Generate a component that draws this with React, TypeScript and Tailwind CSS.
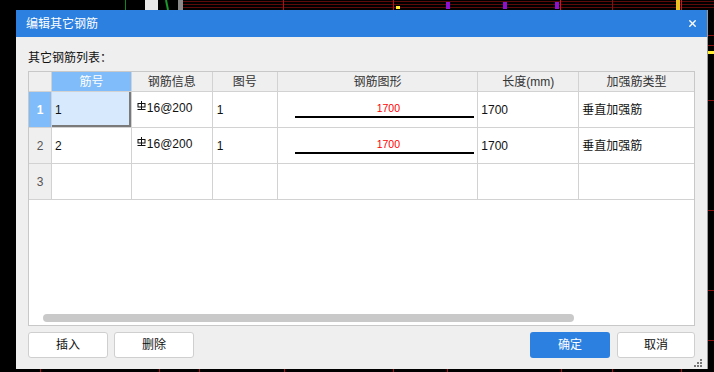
import { X } from "lucide-react";

const cols = [
  { key: "no", title: "筋号", w: "w-[80px]" },
  { key: "info", title: "钢筋信息", w: "w-[81px]" },
  { key: "fig", title: "图号", w: "w-[65px]" },
  { key: "shape", title: "钢筋图形", w: "w-[201px]" },
  { key: "len", title: "长度(mm)", w: "w-[101px]" },
  { key: "type", title: "加强筋类型", w: "w-[115px]" },
];

const rows = [
  { no: "1", info: "16@200", fig: "1", len: "1700", type: "垂直加强筋" },
  { no: "2", info: "16@200", fig: "1", len: "1700", type: "垂直加强筋" },
  null,
];

// grade III rebar mark, not in any installed font
const RebarMark = () => (
  <svg width="9" height="10" viewBox="0 0 9 10" className="mr-px -mt-1 shrink-0">
    <rect x="1" y="2.5" width="7" height="3.5" fill="none" stroke="#111" strokeWidth="1" />
    <line x1="4.5" y1="0" x2="4.5" y2="9" stroke="#111" strokeWidth="1" />
    <line x1="0.5" y1="8.5" x2="8.5" y2="8.5" stroke="#111" strokeWidth="1" />
  </svg>
);

const CadBackdrop = () => (
  <svg className="absolute inset-0" width="714" height="372" viewBox="0 0 714 372">
    <rect width="714" height="372" fill="#000" />
    <line x1="125.5" y1="0" x2="125.5" y2="10" stroke="#0a8a1a" />
    <rect x="145" y="0" width="13" height="10" fill="#e8e8e8" />
    <line x1="166" y1="0" x2="168" y2="10" stroke="#1a9a2a" strokeWidth="2" />
    <rect x="178" y="0" width="5" height="10" fill="#8a8a8a" />
    {[1.5, 4.5, 7.5].map((y) => (
      <line key={y} x1="183" y1={y} x2="714" y2={y} stroke="#5c0a0a" />
    ))}
    <line x1="283.5" y1="0" x2="283.5" y2="10" stroke="#b01010" />
    <line x1="393.5" y1="0" x2="393.5" y2="10" stroke="#c01010" />
    <rect x="396" y="6" width="4" height="3" fill="#ffee33" />
    <rect x="446" y="2" width="4" height="7" fill="#8a12d0" />
    <rect x="503" y="2" width="4" height="7" fill="#8a12d0" />
    <rect x="555" y="2" width="4" height="7" fill="#8a12d0" />
    <line x1="560.5" y1="0" x2="560.5" y2="10" stroke="#e01010" />
    <line x1="612.5" y1="0" x2="612.5" y2="10" stroke="#8a1010" />
    <rect x="676" y="0" width="4" height="10" fill="#e8c020" />
    <line x1="681.5" y1="0" x2="681.5" y2="10" stroke="#e01010" />
    {[35.5, 45.5, 100.5, 210.5, 290.5, 340.5].map((y) => (
      <line key={y} x1="707" y1={y} x2="714" y2={y} stroke="#8a1010" />
    ))}
    <rect x="707" y="51" width="7" height="3" fill="#ffee33" />
    {[40, 159, 199, 284, 393, 447, 561, 612, 681].map((x) => (
      <line key={x} x1={x + 0.5} y1="369" x2={x + 0.5} y2="372" stroke="#b01010" />
    ))}
  </svg>
);

const App = () => {
  return (
    <div className="relative w-[714px] h-[372px] overflow-hidden bg-black font-['Liberation_Sans','Noto_Sans_CJK_SC',sans-serif] text-[12px]">
      <CadBackdrop />

      <div className="relative flex pl-4 pt-[10px]">
        {/* Dialog */}
        <div className="flex flex-col w-[691px] h-[359px] bg-[#efefef] shadow-[1px_0_0_#9a9a9a]">
          <div className="flex items-center justify-between h-[27px] shrink-0 bg-[#2c80e0] pl-[10px] pr-[9px]">
            <span className="text-white text-[12px] leading-4 mt-px">编辑其它钢筋</span>
            <X className="w-[11px] h-[11px] text-white" strokeWidth={3} />
          </div>

          <div className="flex flex-col flex-1 px-3 pt-[13px] pb-[11px]">
            <div className="leading-4 text-[#111] mb-[5px]">其它钢筋列表：</div>

            {/* Table */}
            <div className="flex flex-col h-[255px] border border-[#c8c8c8] bg-white">
              <div className="flex h-5 shrink-0">
                <div className="w-[23px] border-r border-b border-[#d2d2d2] bg-[#efefef]" />
                {cols.map((c, i) => (
                  <div
                    key={c.key}
                    className={`${c.w} flex items-center justify-center leading-4 border-b ${
                      i < cols.length - 1 ? "border-r" : ""
                    } border-[#d2d2d2] ${i === 0 ? "bg-[#80bcf9] text-white" : "bg-[#efefef] text-[#333]"}`}
                  >
                    {c.title}
                  </div>
                ))}
              </div>

              {rows.map((r, ri) => (
                <div key={ri} className="flex h-9 shrink-0">
                  <div
                    className={`w-[23px] flex items-center justify-center border-r border-b border-[#d2d2d2] ${
                      ri === 0 ? "bg-[#80bcf9] text-white font-bold" : "bg-[#efefef] text-[#555]"
                    }`}
                  >
                    {ri + 1}
                  </div>
                  <div
                    className={`w-[80px] flex items-center pl-[3px] border-r border-b border-[#d2d2d2] text-[#111] ${
                      ri === 0 ? "bg-[#d6e9fd] shadow-[inset_-2px_-2px_0_#7a7a7a]" : ""
                    }`}
                  >
                    {r?.no}
                  </div>
                  <div className="w-[81px] flex items-center pl-[5px] pb-[3px] border-r border-b border-[#d2d2d2] text-[#111]">
                    {r && (
                      <>
                        <RebarMark />
                        {r.info}
                      </>
                    )}
                  </div>
                  <div className="w-[65px] flex items-center pl-1 border-r border-b border-[#d2d2d2] text-[#111]">
                    {r?.fig}
                  </div>
                  <div className="w-[201px] flex flex-col justify-center border-r border-b border-[#d2d2d2]">
                    {r && (
                      <>
                        <span className="text-[#ff0000] text-[10.5px] leading-3 ml-[99px]">{r.len}</span>
                        <div className="w-[179px] h-[2px] bg-black mt-[2px] ml-[17px]" />
                      </>
                    )}
                  </div>
                  <div className="w-[101px] flex items-center pl-[3px] border-r border-b border-[#d2d2d2] text-[#111]">
                    {r?.len}
                  </div>
                  <div className="w-[115px] flex items-center pl-[3px] border-b border-[#d2d2d2] text-[#111]">
                    {r?.type}
                  </div>
                </div>
              ))}

              <div className="flex-1" />
              <div className="ml-[14px] w-[531px] h-2 mb-[3px] rounded-full bg-[#c9c9c9]" />
            </div>

            {/* Buttons */}
            <div className="flex items-center mt-[6px]">
              <button className="w-[80px] h-[26px] rounded-[3px] border border-[#cfcfcf] bg-white text-[#111]">插入</button>
              <button className="w-[80px] h-[26px] ml-[6px] rounded-[3px] border border-[#cfcfcf] bg-white text-[#111]">删除</button>
              <div className="flex-1" />
              <button className="w-[80px] h-[26px] rounded-[3px] bg-[#2c80e0] text-white">确定</button>
              <button className="w-[78px] h-[26px] ml-[7px] rounded-[3px] border border-[#cfcfcf] bg-white text-[#111]">取消</button>
            </div>
          </div>
          <div className="relative h-0">
            <svg className="absolute right-[5px] -top-[10px]" width="8" height="8" viewBox="0 0 8 8">
              <rect x="6" y="0" width="2" height="2" fill="#777" />
              <rect x="3" y="3" width="2" height="2" fill="#777" />
              <rect x="6" y="3" width="2" height="2" fill="#777" />
              <rect x="0" y="6" width="2" height="2" fill="#777" />
              <rect x="3" y="6" width="2" height="2" fill="#777" />
              <rect x="6" y="6" width="2" height="2" fill="#777" />
            </svg>
          </div>
        </div>
      </div>
    </div>
  );
};

export default App;
